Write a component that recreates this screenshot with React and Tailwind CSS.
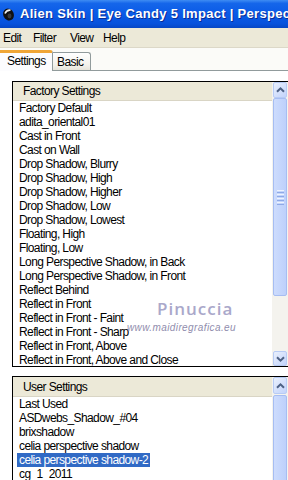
import React from "react";

const factory = [
  "Factory Default",
  "adita_oriental01",
  "Cast in Front",
  "Cast on Wall",
  "Drop Shadow, Blurry",
  "Drop Shadow, High",
  "Drop Shadow, Higher",
  "Drop Shadow, Low",
  "Drop Shadow, Lowest",
  "Floating, High",
  "Floating, Low",
  "Long Perspective Shadow, in Back",
  "Long Perspective Shadow, in Front",
  "Reflect Behind",
  "Reflect in Front",
  "Reflect in Front - Faint",
  "Reflect in Front - Sharp",
  "Reflect in Front, Above",
  "Reflect in Front, Above and Close",
];

const user = [
  "Last Used",
  "ASDwebs_Shadow_#04",
  "brixshadow",
  "celia perspective shadow",
  "celia perspective shadow-2",
  "cg_1_2011",
];

function Chevron({ down }) {
  return (
    <svg width="9" height="6" viewBox="0 0 9 6">
      <path
        d={down ? "M1 1.2 L4.5 4.6 L8 1.2" : "M1 4.8 L4.5 1.4 L8 4.8"}
        fill="none"
        stroke="#4d6185"
        strokeWidth="2"
      />
    </svg>
  );
}

function ArrowBtn({ down, h }) {
  return (
    <div
      className={`${h} mx-px shrink-0 rounded-[2px] border border-[#b7cbf5] bg-[linear-gradient(135deg,#e9f0fd,#c2d3fb)] flex items-center justify-center`}
    >
      <Chevron down={down} />
    </div>
  );
}

function Grip() {
  return (
    <div className="flex flex-col gap-px items-center">
      <div className="w-[7px] h-px bg-[#eef3fe]" />
      <div className="w-[7px] h-px bg-[#8fa9e6]" />
      <div className="w-[7px] h-px bg-[#eef3fe]" />
      <div className="w-[7px] h-px bg-[#8fa9e6]" />
      <div className="w-[7px] h-px bg-[#eef3fe]" />
      <div className="w-[7px] h-px bg-[#8fa9e6]" />
      <div className="w-[7px] h-px bg-[#eef3fe]" />
      <div className="w-[7px] h-px bg-[#8fa9e6]" />
    </div>
  );
}

function FactoryScroll() {
  return (
    <div className="w-[16px] shrink-0 bg-[#f4f3ee] flex flex-col">
      <ArrowBtn h="h-[16px]" />
      <div className="h-[198px] mx-px rounded-[2px] border border-[#a6bdf2] bg-[linear-gradient(90deg,#cddcfd,#bdd0fb)] flex items-center justify-center">
        <Grip />
      </div>
      <div className="flex-1" />
      <ArrowBtn down h="h-[15px]" />
    </div>
  );
}

function UserScroll() {
  return (
    <div className="w-[16px] shrink-0 bg-[#f4f3ee] flex flex-col">
      <ArrowBtn h="h-[17px]" />
      <div className="mt-px flex-1 mx-px rounded-[2px] border border-[#a6bdf2] bg-[linear-gradient(90deg,#cddcfd,#bdd0fb)]" />
    </div>
  );
}

function Row({ text, selected }) {
  return (
    <div className="h-[14px] leading-[14px] pl-[4px] whitespace-nowrap">
      <span
        className={`inline-block h-[14px] px-[2px] ${
          selected ? "bg-[#316ac5] text-white" : "text-black"
        }`}
      >
        {text}
      </span>
    </div>
  );
}

export default function App() {
  return (
    <div className="relative w-[288px] h-[480px] overflow-hidden bg-white font-['Liberation_Sans',Arial,sans-serif] text-[12px] tracking-[-0.6px] text-black">
      {/* Title bar */}
      <div className="h-[28px] flex items-center overflow-hidden bg-[linear-gradient(180deg,#3f8cf3_0%,#1566ea_12%,#0a5ae6_50%,#0752dc_85%,#0646c4_100%)] whitespace-nowrap">
        <svg width="13" height="15" viewBox="0 0 13 15" className="ml-[2px] mr-[5px] shrink-0">
          <ellipse cx="6.5" cy="7.5" rx="5.2" ry="6.2" fill="#111" transform="rotate(-25 6.5 7.5)" />
          <path d="M3 6.5 Q4.5 2.8 8.5 3.2" fill="none" stroke="#f2f2f2" strokeWidth="1.6" />
          <ellipse cx="7.5" cy="9" rx="2" ry="2.4" fill="#3a3a3a" />
        </svg>
        <span className="text-white font-bold text-[13px] tracking-[0.3px] [text-shadow:1px_1px_0_#0a2c96]">
          Alien Skin | Eye Candy 5 Impact | Perspective Shadow
        </span>
      </div>

      {/* Menu bar */}
      <div className="h-[19px] bg-[#ece9d8] flex items-center pl-[3px] whitespace-nowrap">
        <span className="w-[30px]">Edit</span>
        <span className="w-[37px]">Filter</span>
        <span className="w-[33px]">View</span>
        <span>Help</span>
      </div>
      <div className="h-px bg-[#dcd8c8]" />

      {/* Tabs */}
      <div className="h-[23px] flex items-end border-b border-[#919b9c] bg-[#fbfbf8]">
        <div className="relative z-10 -mb-px w-[53px] h-[21px] bg-[#fcfcfe] border-t-[3px] border-t-[#f0a636] border-r border-r-[#919b9c] rounded-tr-[3px] pl-[7px] leading-[16px]">
          Settings
        </div>
        <div className="w-[38px] h-[18px] border border-[#919b9c] border-l-0 border-b-0 rounded-tr-[3px] bg-[linear-gradient(180deg,#ffffff,#f3f2ec_70%,#e6e4da)] pl-[4px] leading-[19px]">
          Basic
        </div>
      </div>

      {/* Panel */}
      <div className="pl-[12px] pt-[10px]">
        {/* Factory Settings */}
        <div className="h-[286px] border border-black border-r-0 flex">
          <div className="flex-1 min-w-0 flex flex-col">
            <div className="h-[19px] shrink-0 bg-[#ece9d8] border-b border-[#d9d5c5] pl-[10px] leading-[19px]">
              Factory Settings
            </div>
            <div className="flex-1 overflow-hidden">
              {factory.map((t) => (
                <Row key={t} text={t} />
              ))}
            </div>
          </div>
          <FactoryScroll />
        </div>

        {/* User Settings */}
        <div className="mt-[9px] h-[120px] border border-black border-r-0 border-b-0 flex">
          <div className="flex-1 min-w-0 flex flex-col">
            <div className="h-[20px] shrink-0 bg-[#ece9d8] border-b border-[#d9d5c5] pl-[10px] leading-[20px]">
              User Settings
            </div>
            <div className="flex-1 overflow-hidden">
              {user.map((t, i) => (
                <Row key={t} text={t} selected={i === 4} />
              ))}
            </div>
          </div>
          <UserScroll />
        </div>
      </div>

      {/* Watermark */}
      <div className="absolute left-[157px] top-[299px] text-[17px] leading-[20px] tracking-[1px] font-semibold font-['Open_Sans',sans-serif] text-[#aaa8ca] [text-shadow:0_0_2px_#ffffff]">
        Pinuccia
      </div>
      <div className="absolute left-[127px] top-[322px] text-[10px] leading-[12px] tracking-[0.4px] italic font-['Liberation_Sans',sans-serif] text-[#908dad] whitespace-nowrap">
        www.maidiregrafica.eu
      </div>
    </div>
  );
}
